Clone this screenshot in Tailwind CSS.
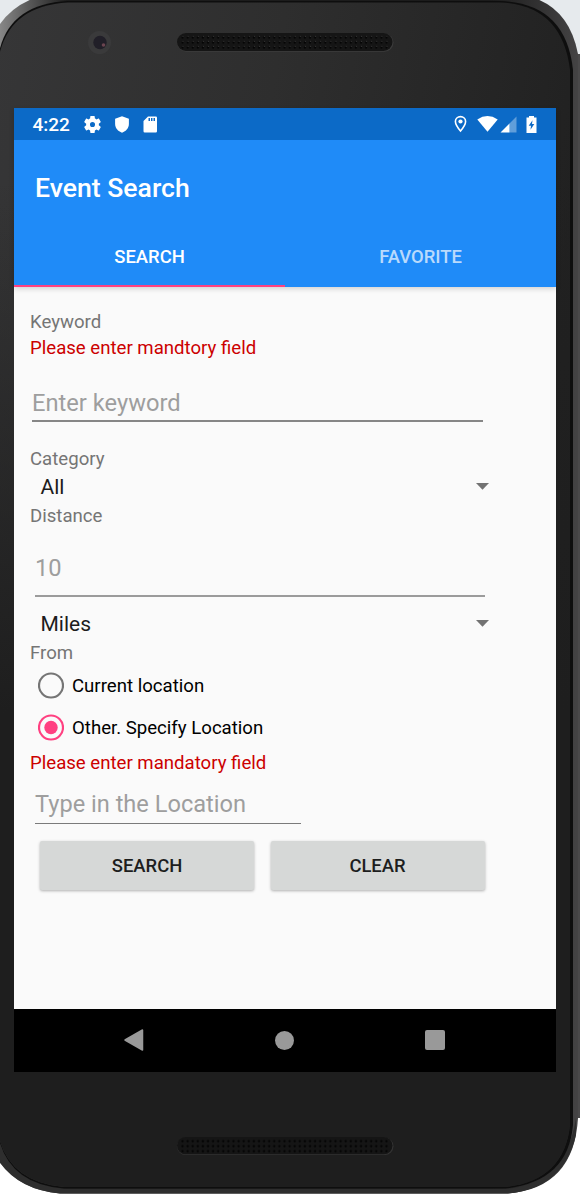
<!DOCTYPE html>
<html lang="en">
<head>
<meta charset="utf-8">
<title>Event Search</title>
<script src="https://cdn.jsdelivr.net/npm/@tailwindcss/browser@4"></script>
</head>
<body class="bg-white">
<div class="relative h-[1196px] w-[580px] overflow-hidden font-['Roboto',sans-serif]">
  <!-- device body -->
  <svg class="absolute inset-0" width="580" height="1196" viewBox="0 0 580 1196">
    <defs>
      <linearGradient id="glass" x1="0" y1="0" x2="1" y2="0.35">
        <stop offset="0" stop-color="#363637"/><stop offset="0.45" stop-color="#2e2e2e"/><stop offset="0.95" stop-color="#212121"/>
      </linearGradient>
      <linearGradient id="fade" x1="0" y1="0" x2="0" y2="1">
        <stop offset="0.15" stop-color="#1e1e1e" stop-opacity="0"/><stop offset="0.6" stop-color="#1e1e1e"/>
      </linearGradient>
      <linearGradient id="rim" x1="0" y1="0" x2="1" y2="0">
        <stop offset="0" stop-color="#8a8a8a"/><stop offset="0.12" stop-color="#1c1c1c"/><stop offset="0.85" stop-color="#1c1c1c"/><stop offset="1" stop-color="#444344"/>
      </linearGradient>
      <pattern id="mesh" x="180" y="35" width="5.1" height="5" patternUnits="userSpaceOnUse">
        <circle cx="2.5" cy="2.7" r="1.1" fill="#050505"/><circle cx="3" cy="1.3" r="0.5" fill="#3c3c3c"/>
      </pattern>
      <pattern id="mesh2" x="180" y="1138.5" width="5.1" height="5" patternUnits="userSpaceOnUse">
        <circle cx="2.5" cy="2.6" r="1.2" fill="#030303"/>
      </pattern>
    </defs>
    <rect width="580" height="600" fill="#e6eaed"/>
    <rect x="577" y="54" width="3" height="1064" fill="#4a494a"/>
    <path d="M-2 27Q10 8 32 -1H537Q570 12 578 54V1118Q574 1188 508 1193.500H60Q18 1190 -2 1160Z" fill="url(#rim)"/>
    <path d="M-2 1130Q6 1180 60 1188.500H510Q566 1182 576 1118V1135Q564 1188 508 1193.500H60Q18 1190 -2 1160Z" fill="#2e2e2e"/>
    <path d="M-2 58Q6 4 68 1H500Q566 3 573 70V1125Q568 1182 505 1188.500H64Q8 1184 -2 1135Z" fill="#0e0e0e"/>
    <path d="M-2 62Q6 6 68 2.500H500Q562 5 570 70V1125Q564 1181 505 1187H64Q8 1182 -2 1133Z" fill="url(#glass)"/>
    <path d="M-2 62Q6 6 68 2.500H500Q562 5 570 70V1125Q564 1181 505 1187H64Q8 1182 -2 1133Z" fill="url(#fade)"/>
    <circle cx="99.500" cy="42.500" r="11.500" fill="#3a3a3b"/>
    <circle cx="100" cy="42.500" r="6.700" fill="#211f28"/>
    <circle cx="103.500" cy="45" r="1.800" fill="#6b4550"/>
    <rect x="177" y="33.500" width="216.500" height="18.200" rx="9.100" fill="#3c3c3c"/>
    <rect x="177" y="33" width="215.500" height="18" rx="9" fill="#151515"/>
    <rect x="180" y="35" width="209" height="15" rx="5" fill="url(#mesh)"/>
    <rect x="177" y="1137.500" width="216.500" height="17.500" rx="8.700" fill="#333"/>
    <rect x="177" y="1137" width="215.500" height="17.200" rx="8.600" fill="#151515"/>
    <rect x="180" y="1138.500" width="209" height="15" rx="5" fill="url(#mesh2)"/>
  </svg>

  <!-- screen -->
  <main class="relative mt-[108px] ml-3.5 flex h-[964px] w-[542px] flex-col bg-[#fafafa]">
    <header class="relative z-10 flex h-[179px] shrink-0 flex-col bg-[#1f8bf8] shadow-[0_2px_5px_rgba(0,0,0,0.16)]">
      <div class="flex h-8 shrink-0 items-center justify-between bg-[#0c6ac7] pr-[19px] pl-[18.500px] text-white">
        <div class="flex items-center">
          <span class="w-[49.500px] text-[19px] leading-[33px] font-medium">4:22</span>
          <svg class="ml-0.5" width="17" height="17" viewBox="2 2 20 20" fill="currentColor"><path d="M19.430 12.980c.04-.32.07-.64.07-.98s-.03-.66-.07-.98l2.110-1.650c.19-.15.24-.42.12-.64l-2-3.460c-.12-.22-.39-.3-.61-.22l-2.490 1c-.52-.4-1.080-.73-1.690-.98l-.38-2.650C14.460 2.180 14.250 2 14 2h-4c-.25 0-.46.18-.49.42l-.38 2.650c-.61.25-1.170.59-1.690.98l-2.490-1c-.23-.09-.49 0-.61.22l-2 3.460c-.13.22-.07.49.12.64l2.110 1.650c-.04.32-.07.65-.07.98s.03.66.07.98l-2.110 1.650c-.19.15-.24.42-.12.64l2 3.460c.12.22.39.3.61.22l2.490-1c.52.4 1.080.73 1.690.98l.38 2.650c.03.24.24.42.49.42h4c.25 0 .46-.18.49-.42l.38-2.650c.61-.25 1.170-.59 1.690-.98l2.490 1c.23.09.49 0 .61-.22l2-3.460c.12-.22.07-.49-.12-.64l-2.110-1.650zM12 15a3 3 0 1 1 0-6 3 3 0 0 1 0 6z"/></svg>
          <svg class="ml-[12.500px]" width="16" height="17" viewBox="0 0 16 17" fill="currentColor"><path d="M8 .3 14.900 2.700V8C14.900 12 12 15.400 8 16.700 4 15.400 1.100 12 1.100 8V2.700Z"/></svg>
          <svg class="ml-[13.500px]" width="15" height="17" viewBox="0 0 15 17" fill="currentColor"><path fill-rule="evenodd" d="M5 .5H12.800Q14 .5 14 1.700V15.300Q14 16.500 12.800 16.500H1.700Q.5 16.500 .5 15.300V5ZM5.500 2V5H7V2ZM8 2V5H9.500V2ZM10.500 2V5H12V2Z"/></svg>
        </div>
        <div class="flex items-center">
          <svg width="13" height="18" viewBox="0 0 13 18"><path d="M6.500 1.600C3.600 1.600 1.400 3.700 1.400 6.400 1.400 9.800 6.500 16 6.500 16S11.600 9.800 11.600 6.400C11.600 3.700 9.400 1.600 6.500 1.600Z" fill="none" stroke="currentColor" stroke-width="1.600"/><circle cx="6.500" cy="6.500" r="2.100" fill="currentColor"/></svg>
          <svg class="ml-2.5" width="21" height="16" viewBox="0 0 21 16" fill="currentColor"><path d="M.3 3.400Q10.500 -3.200 20.700 3.400L10.500 15.800Z"/></svg>
          <svg class="ml-0.5" width="17" height="17" viewBox="0 0 17 17" fill="currentColor"><path d="M16.500 .5V16.500H9.500V7.500Z" opacity=".35"/><path d="M9.500 7.500V16.500H.5Z"/></svg>
          <svg class="ml-[9px]" width="11" height="17" viewBox="0 0 11 17"><path d="M3 0H8V1.500H10.500V17H.5V1.500H3Z" fill="currentColor"/><path d="M6.500 4.200 2.700 9.800H5L4.500 13.800 8.300 8.100H6Z" fill="#0c6ac7"/></svg>
        </div>
      </div>
      <h1 class="h-[84px] shrink-0 pl-[21px] text-[26.600px] leading-[95px] font-medium text-white">Event Search</h1>
      <nav class="flex h-[63px] text-center text-[18.450px] leading-[66px] font-medium">
        <div class="w-[271px] border-b-2 border-[#ff4081] text-white">SEARCH</div>
        <div class="w-[271px] text-white/70">FAVORITE</div>
      </nav>
    </header>

    <form class="flex w-[542px] grow flex-col pt-[23px] pl-4 text-[18.620px] text-[#757575]">
      <div class="h-[25px] leading-[25px]">Keyword</div>
      <div class="h-[25px] leading-[27px] text-[#cc0000]">Please enter mandtory field</div>
      <div class="mt-[23px] ml-0.5 h-[39px] w-[451px] border-b-2 border-[#868686] text-[23.700px] leading-[40px] text-[#9e9e9e]">Enter keyword</div>
      <div class="mt-6 h-[26px] leading-[26px]">Category</div>
      <div class="ml-[10.500px] flex h-[30px] w-[448px] items-center justify-between text-[21px] leading-[30px] text-[#1c1c1c]">All
        <svg class="mb-px" width="13" height="7" viewBox="0 0 13 7"><path d="M0 0H13L6.500 6.700Z" fill="#727272"/></svg></div>
      <div class="h-[27px] leading-[29px]">Distance</div>
      <div class="mt-[23px] ml-[5px] h-[45px] w-[450px] border-b-2 border-[#9b9b9b] text-[23.700px] leading-[33px] text-[#9e9e9e]">10</div>
      <div class="mt-3 ml-[10.500px] flex h-[30px] w-[448px] items-center justify-between text-[21px] leading-[30px] text-[#1c1c1c]">Miles
        <svg class="mb-px" width="13" height="7" viewBox="0 0 13 7"><path d="M0 0H13L6.500 6.700Z" fill="#727272"/></svg></div>
      <div class="h-[26px] leading-[29px]">From</div>
      <div class="ml-2 flex h-[42px] gap-2 leading-[43px] text-black">
        <svg class="mt-[7px]" width="26" height="27" viewBox="0 0 26 27"><circle cx="13" cy="13.500" r="12" fill="none" stroke="#757575" stroke-width="2.200"/></svg>Current location</div>
      <div class="ml-2 flex h-[42px] gap-2 leading-[43px] text-black">
        <svg class="mt-[7px]" width="26" height="27" viewBox="0 0 26 27"><circle cx="13" cy="13.500" r="12" fill="none" stroke="#ff4081" stroke-width="2.200"/><circle cx="13" cy="13.500" r="6.700" fill="#ff4081"/></svg>Other. Specify Location</div>
      <div class="h-[27px] leading-[29px] text-[#cc0000]">Please enter mandatory field</div>
      <div class="mt-3 ml-[5px] h-[35.500px] w-[266px] border-b-[1.500px] border-[#7b7b7b] text-[23.600px] leading-[33px] text-[#9e9e9e]">Type in the Location</div>
      <div class="mt-[17.500px] ml-2.5 flex gap-[16.500px] text-center text-[18.450px] font-medium text-[#1d1e1e]">
        <div class="h-[48.500px] w-[214px] rounded-xs bg-[#d6d8d7] leading-[50px] shadow-[0_1px_3px_rgba(0,0,0,0.3)]">SEARCH</div>
        <div class="h-[48.500px] w-[214px] rounded-xs bg-[#d6d8d7] leading-[50px] shadow-[0_1px_3px_rgba(0,0,0,0.3)]">CLEAR</div>
      </div>
    </form>

    <footer class="flex h-[63px] shrink-0 items-center justify-between bg-black pr-[111.500px] pb-px pl-[109px]">
      <svg width="21" height="22" viewBox="0 0 21 22"><path d="M19.500 1V21L2 11Z" fill="#999" stroke="#999" stroke-width="1.500" stroke-linejoin="round"/></svg>
      <div class="size-[19px] rounded-full bg-[#999]"></div>
      <div class="size-5 rounded-xs bg-[#999]"></div>
    </footer>
  </main>
</div>
</body>
</html>
